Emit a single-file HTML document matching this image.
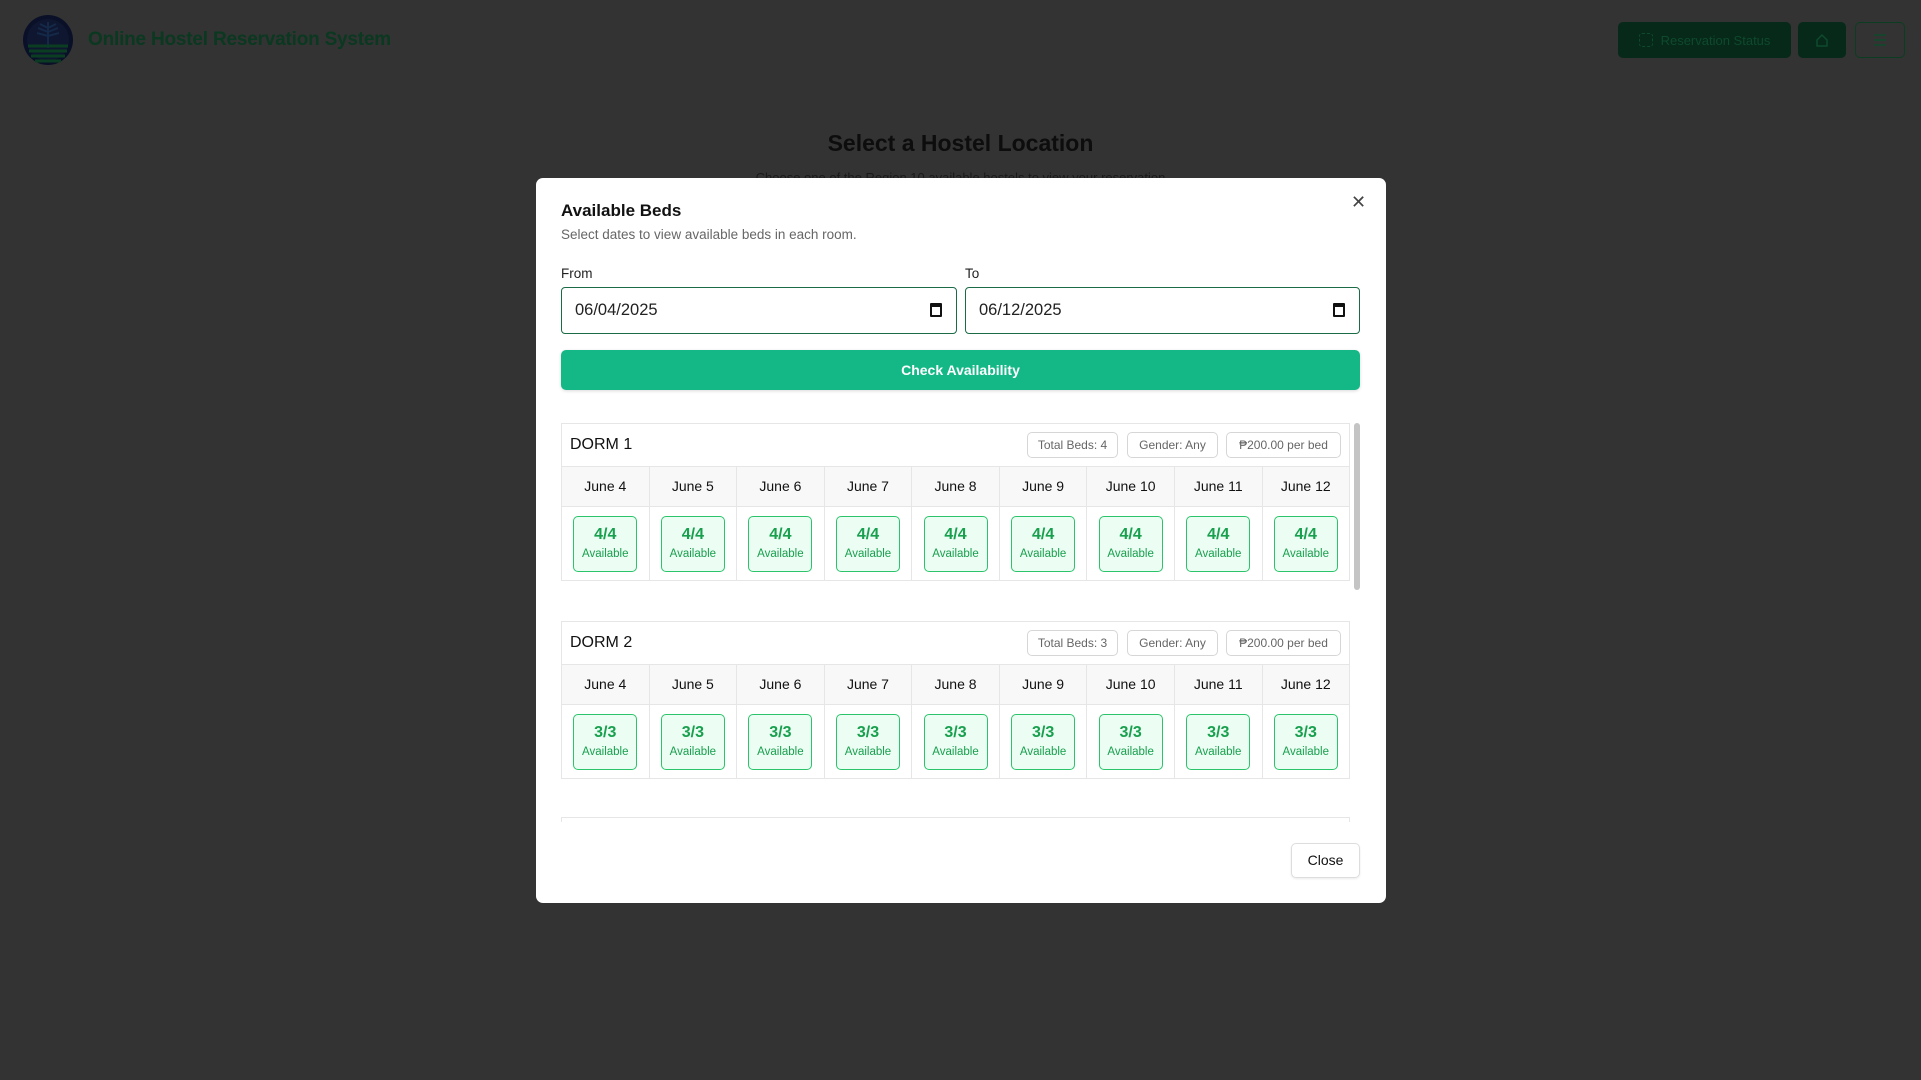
<!DOCTYPE html>
<html><head><meta charset="utf-8"><style>
*{box-sizing:border-box;margin:0;padding:0}
body{width:1921px;height:1080px;background:#333;font-family:"Liberation Sans",sans-serif;position:relative;overflow:hidden}
.abs{position:absolute}
.title{left:88px;top:29px;font-size:19px;color:#0a3820;font-weight:600;letter-spacing:-0.2px}
.rs{left:1618px;top:22px;width:173px;height:36px;background:#06291a;border-radius:5px;color:#0f4a2c;font-size:13px;display:flex;align-items:center;justify-content:center;gap:8px}
.hm{left:1798px;top:22px;width:48px;height:36px;background:#06291a;border-radius:5px}
.mn{left:1855px;top:22px;width:50px;height:36px;border:1px solid #0b3d22;border-radius:5px}
.h1{left:0;width:1921px;top:130px;text-align:center;font-size:23px;font-weight:700;color:#0d0d0d}
.sub{left:0;width:1921px;top:170px;text-align:center;font-size:13px;color:#1a1a1a}
.modal{left:536px;top:178px;width:850px;height:725px;background:#fff;border-radius:7px}
.mt{left:25px;top:23px;font-size:17px;font-weight:600;color:#111}
.ms{left:25px;top:49px;font-size:13.5px;color:#666}
.x{left:815px;top:14px;font-size:18px;color:#444;font-weight:300}
.lbl{top:88px;font-size:13.5px;color:#222}
.inp{top:109px;width:396px;height:47px;border:1.5px solid #1b6b47;border-radius:4px;font-size:16.5px;color:#222;padding:13px 13px}
.cal{position:absolute;right:14px;top:15px;width:12px;height:14px;border:2px solid #111;border-top-width:4px;border-radius:1px}
.btn{left:25px;top:172px;width:799px;height:40px;background:#14b886;border-radius:5px;color:#fff;font-weight:700;font-size:14px;text-align:center;line-height:40px;box-shadow:0 1px 3px rgba(0,0,0,.15)}
.card{left:25px;width:789px;border:1px solid #e6e6e6}
.ch{height:43px;border-bottom:1px solid #e6e6e6;position:relative}
.ch .n{position:absolute;left:8px;top:12px;font-size:16px;color:#111}
.pill{position:absolute;top:8px;height:26px;border:1px solid #d6d6d6;border-radius:5px;font-size:12px;color:#666;line-height:24px;text-align:center}
.row{display:flex}
.row div.c{flex:1;border-right:1px solid #e6e6e6}
.row div.c:last-child{border-right:none}
.dr{height:40px;background:#f8f8f8;border-bottom:1px solid #e6e6e6}
.dr .c{text-align:center;line-height:38px;font-size:14px;color:#111}
.br .c{height:73px;display:flex;align-items:center;justify-content:center}
.b{width:64px;height:56px;border:1.5px solid #2bc46b;border-radius:5px;background:#ecfdf3;text-align:center;color:#18a04e}
.b span{display:block;font-size:16px;font-weight:700;margin-top:9px}
.b i{display:block;font-style:normal;font-size:11.5px;margin-top:4px}
.sb{left:818px;top:245px;width:6px;height:167px;background:#c4c4c4;border-radius:3px}
.close{left:755px;top:665px;width:69px;height:35px;border:1px solid #ddd;border-radius:5px;font-size:14px;color:#111;text-align:center;line-height:33px;box-shadow:0 1px 2px rgba(0,0,0,.08)}
</style></head><body>
<svg class="abs" style="left:22px;top:14px" width="52" height="52" viewBox="0 0 52 52">
<circle cx="26" cy="26" r="25" fill="#0a1028"/>
<circle cx="26" cy="26" r="21" fill="#0f1630"/>
<path d="M26 8 L26 34 M26 14 L18 10 M26 18 L16 14 M26 22 L15 19 M26 14 L34 10 M26 18 L36 14 M26 22 L37 19" stroke="#142848" stroke-width="2"/>
<path d="M6 32 H46 M7 37 H45 M9 42 H43 M13 47 H39" stroke="#0b3d22" stroke-width="3"/>
</svg>
<div class="abs title">Online Hostel Reservation System</div>
<div class="abs rs"><span style="width:14px;height:14px;border:1.5px dashed #0f4a2c;border-radius:3px;display:inline-block"></span>Reservation Status</div>
<div class="abs hm"><svg width="48" height="36"><path d="M19 18 L24 13 L29 18 V24 H19 Z" fill="none" stroke="#0f4a2c" stroke-width="1.5"/></svg></div>
<div class="abs mn"><svg width="48" height="34"><path d="M18 12 H30 M18 17 H30 M18 22 H30" stroke="#0f4a2c" stroke-width="1.5"/></svg></div>
<div class="abs h1">Select a Hostel Location</div>
<div class="abs sub">Choose one of the Region 10 available hostels to view your reservation</div>

<div class="abs modal">
<div class="abs mt">Available Beds</div>
<div class="abs ms">Select dates to view available beds in each room.</div>
<div class="abs x">✕</div>
<div class="abs lbl" style="left:25px">From</div>
<div class="abs lbl" style="left:429px">To</div>
<div class="abs inp" style="left:25px">06/04/2025<span class="cal"></span></div>
<div class="abs inp" style="left:429px;width:395px">06/12/2025<span class="cal"></span></div>
<div class="abs btn">Check Availability</div>

<div class="abs card" style="top:245px">
<div class="ch"><span class="n">DORM 1</span>
<span class="pill" style="left:465px;width:91px">Total Beds: 4</span>
<span class="pill" style="left:565px;width:91px">Gender: Any</span>
<span class="pill" style="left:664px;width:115px">₱200.00 per bed</span></div>
<div class="row dr"><div class="c">June 4</div><div class="c">June 5</div><div class="c">June 6</div><div class="c">June 7</div><div class="c">June 8</div><div class="c">June 9</div><div class="c">June 10</div><div class="c">June 11</div><div class="c">June 12</div></div>
<div class="row br">
<div class="c"><div class="b"><span>4/4</span><i>Available</i></div></div>
<div class="c"><div class="b"><span>4/4</span><i>Available</i></div></div>
<div class="c"><div class="b"><span>4/4</span><i>Available</i></div></div>
<div class="c"><div class="b"><span>4/4</span><i>Available</i></div></div>
<div class="c"><div class="b"><span>4/4</span><i>Available</i></div></div>
<div class="c"><div class="b"><span>4/4</span><i>Available</i></div></div>
<div class="c"><div class="b"><span>4/4</span><i>Available</i></div></div>
<div class="c"><div class="b"><span>4/4</span><i>Available</i></div></div>
<div class="c"><div class="b"><span>4/4</span><i>Available</i></div></div>
</div></div>

<div class="abs card" style="top:443px">
<div class="ch"><span class="n">DORM 2</span>
<span class="pill" style="left:465px;width:91px">Total Beds: 3</span>
<span class="pill" style="left:565px;width:91px">Gender: Any</span>
<span class="pill" style="left:664px;width:115px">₱200.00 per bed</span></div>
<div class="row dr"><div class="c">June 4</div><div class="c">June 5</div><div class="c">June 6</div><div class="c">June 7</div><div class="c">June 8</div><div class="c">June 9</div><div class="c">June 10</div><div class="c">June 11</div><div class="c">June 12</div></div>
<div class="row br">
<div class="c"><div class="b"><span>3/3</span><i>Available</i></div></div>
<div class="c"><div class="b"><span>3/3</span><i>Available</i></div></div>
<div class="c"><div class="b"><span>3/3</span><i>Available</i></div></div>
<div class="c"><div class="b"><span>3/3</span><i>Available</i></div></div>
<div class="c"><div class="b"><span>3/3</span><i>Available</i></div></div>
<div class="c"><div class="b"><span>3/3</span><i>Available</i></div></div>
<div class="c"><div class="b"><span>3/3</span><i>Available</i></div></div>
<div class="c"><div class="b"><span>3/3</span><i>Available</i></div></div>
<div class="c"><div class="b"><span>3/3</span><i>Available</i></div></div>
</div></div>

<div class="abs" style="left:25px;top:639px;width:789px;height:5px;border:1px solid #e6e6e6;border-bottom:none"></div>
<div class="abs sb"></div>
<div class="abs close">Close</div>
</div>
</body></html>
